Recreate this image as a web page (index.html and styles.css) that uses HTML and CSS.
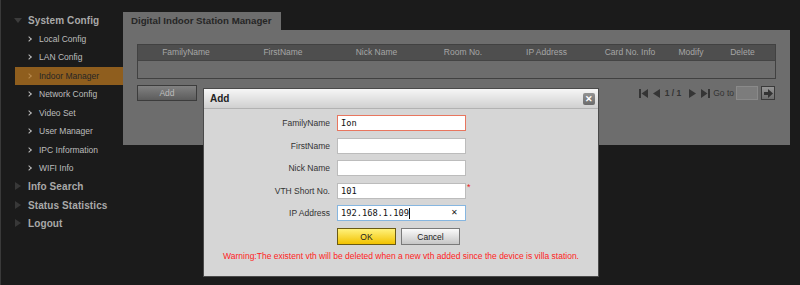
FILE: index.html
```html
<!DOCTYPE html>
<html lang="en">
<head>
  <meta charset="UTF-8" />
  <meta name="viewport" content="width=device-width, initial-scale=1.0" />
  <title>Digital Indoor Station Manager</title>
  <link rel="stylesheet" href="styles.css">
</head>
<body>
  <div class="layout">
    <ul class="menu">
      <li class="group open"><span class="tri"></span>System Config</li>
      <li class="item"><span class="chev"></span>Local Config</li>
      <li class="item"><span class="chev"></span>LAN Config</li>
      <li class="item active"><span class="chev"></span>Indoor Manager</li>
      <li class="item"><span class="chev"></span>Network Config</li>
      <li class="item"><span class="chev"></span>Video Set</li>
      <li class="item"><span class="chev"></span>User Manager</li>
      <li class="item"><span class="chev"></span>IPC Information</li>
      <li class="item"><span class="chev"></span>WIFI Info</li>
      <li class="group"><span class="tri"></span>Info Search</li>
      <li class="group"><span class="tri"></span>Status Statistics</li>
      <li class="group"><span class="tri"></span>Logout</li>
    </ul>

    <div class="main">
      <div class="tab">Digital Indoor Station Manager</div>
      <div class="panel">
        <div class="table">
          <div class="thead">
            <span>FamilyName</span>
            <span>FirstName</span>
            <span>Nick Name</span>
            <span>Room No.</span>
            <span>IP Address</span>
            <span>Card No. Info</span>
            <span>Modify</span>
            <span>Delete</span>
          </div>
          <div class="tbody"></div>
        </div>
        <div class="toolbar">
          <button class="btn-add">Add</button>
          <div class="pager">
            <svg class="pg first" width="9" height="9" viewBox="0 0 9 9"><rect x="0" y="0" width="2" height="9"/><polygon points="9,0 9,9 2.5,4.5"/></svg>
            <svg class="pg prev" width="7" height="9" viewBox="0 0 7 9"><polygon points="7,0 7,9 0,4.5"/></svg>
            <span class="pages">1 / 1</span>
            <svg class="pg next" width="7" height="9" viewBox="0 0 7 9"><polygon points="0,0 0,9 7,4.5"/></svg>
            <svg class="pg last" width="9" height="9" viewBox="0 0 9 9"><polygon points="0,0 0,9 6.5,4.5"/><rect x="7" y="0" width="2" height="9"/></svg>
            <span class="goto">Go to</span>
            <span class="goto-input"></span>
            <span class="goto-btn">
              <svg width="9" height="9" viewBox="0 0 9 9"><polygon points="0,3 4,3 4,0 9,4.5 4,9 4,6 0,6"/></svg>
            </span>
          </div>
        </div>
      </div>
    </div>
  </div>

  <div class="dialog">
    <div class="dialog-title">
      <span>Add</span>
      <span class="close">&#10005;</span>
    </div>
    <div class="form">
      <label>FamilyName</label>
      <div class="field error">Ion</div>
      <span></span>

      <label>FirstName</label>
      <div class="field"></div>
      <span></span>

      <label>Nick Name</label>
      <div class="field"></div>
      <span></span>

      <label>VTH Short No.</label>
      <div class="field">101</div>
      <span class="req">*</span>

      <label>IP Address</label>
      <div class="field focus">192.168.1.109<span class="caret"></span><span class="clear">&#10005;</span></div>
      <span></span>

      <div class="actions">
        <button class="btn-ok">OK</button>
        <button class="btn-cancel">Cancel</button>
      </div>
    </div>
    <p class="warning">Warning:The existent vth will be deleted when a new vth added since the device is villa station.</p>
  </div>
</body>
</html>
```

FILE: styles.css
```css
body {
  margin: 0;
  width: 800px;
  height: 285px;
  overflow: hidden;
  background: #1b1b1b;
  font-family: 'Liberation Sans', Arial, sans-serif;
  font-size: 8.5px;
  position: relative;
  box-sizing: border-box;
  border-left: 1px solid #3a3a3a;
}

.layout {
  display: flex;
}

/* sidebar */

.menu {
  list-style: none;
  margin: 0;
  padding: 11px 0 0 0;
  width: 122px;
}

.menu li {
  height: 18.5px;
  display: flex;
  align-items: center;
}

.menu .group {
  padding-left: 13px;
  font-size: 10px;
  font-weight: bold;
  color: #a9a9a9;
  letter-spacing: 0.1px;
}

.menu .tri {
  width: 9px;
  height: 9px;
  margin-right: 5px;
  position: relative;
}

.menu .tri::before {
  content: '';
  position: absolute;
  left: 1px;
  top: 0;
  border-left: 6px solid #383838;
  border-top: 4.5px solid transparent;
  border-bottom: 4.5px solid transparent;
}

.menu .open .tri::before {
  left: 0;
  top: 2px;
  border-top: 5px solid #3c3c3c;
  border-left: 4.5px solid transparent;
  border-right: 4.5px solid transparent;
  border-bottom: none;
}

.menu .item {
  padding-left: 27px;
  color: #bdbdbd;
}

.menu .chev {
  width: 3px;
  height: 3px;
  border-top: 1.5px solid #bdbdbd;
  border-right: 1.5px solid #bdbdbd;
  transform: rotate(45deg);
  margin-right: 8px;
  margin-left: -1px;
}

.menu .item.active {
  margin-left: 14px;
  padding-left: 13px;
  background: #8f5e1e;
  color: #262626;
}

.menu .active .chev {
  border-color: #b8894c;
}

/* main panel */

.main {
  padding-top: 12px;
  width: 667px;
}

.tab {
  width: 150px;
  height: 18px;
  line-height: 18px;
  padding-left: 8px;
  background: #6d6d6d;
  color: #262626;
  font-size: 9.7px;
  font-weight: bold;
}

.panel {
  background: #6d6d6d;
  height: 101px;
  padding: 14px 14px 0 14px;
}

.table {
  border: 1px solid #414141;
}

.thead {
  display: grid;
  grid-template-columns: 96px 98px 89px 84px 83px 84px 38px 65px;
  height: 15px;
  line-height: 15px;
  background: #4e4e4e;
  color: #a6a6a6;
  text-align: center;
}

.tbody {
  height: 17px;
  border-top: 1px solid #444;
}

.toolbar {
  margin-top: 6px;
  display: flex;
  justify-content: space-between;
  align-items: center;
}

.btn-add {
  width: 60px;
  height: 16px;
  padding: 0;
  border: 1px solid #3c3c3c;
  background: linear-gradient(#818181, #5c5c5c);
  color: #bcbcbc;
  font-family: inherit;
  font-size: 8.5px;
}

.pager {
  display: flex;
  align-items: center;
  color: #333;
  margin-right: 1px;
}

.pg {
  fill: #353535;
}

.pager .prev { margin-left: 5px; }
.pager .pages { margin-left: 5px; font-weight: bold; }
.pager .next { margin-left: 8px; }
.pager .last { margin-left: 5px; }
.pager .goto { margin-left: 3px; }

.goto-input {
  margin-left: 2px;
  width: 20px;
  height: 12px;
  border: 1px solid #8a8a8a;
  background: #7c7c7c;
}

.goto-btn {
  margin-left: 3px;
  width: 12px;
  height: 12px;
  border: 1px solid #3a3a3a;
  background: linear-gradient(#959595, #6c6c6c);
  display: flex;
  align-items: center;
  justify-content: center;
  fill: #333;
}

/* add dialog */

.dialog {
  position: absolute;
  left: 202px;
  top: 88px;
  width: 394px;
  height: 187px;
  background: #d6d6d6;
  border: 1px solid #4a4a4a;
}

.dialog-title {
  height: 19px;
  display: flex;
  justify-content: space-between;
  align-items: center;
  padding: 0 3px 0 6px;
  background: linear-gradient(#f6f6f6, #d0d0d0);
  border-bottom: 1px solid #b2b2b2;
  font-size: 10px;
  font-weight: bold;
  color: #222;
}

.close {
  width: 12px;
  height: 12px;
  line-height: 12px;
  text-align: center;
  border-radius: 2px;
  background: linear-gradient(#939393, #6b6b6b);
  color: #fff;
  font-size: 9px;
}

.form {
  display: grid;
  grid-template-columns: 126px 129px 1fr;
  column-gap: 7px;
  row-gap: 6.5px;
  padding-top: 6px;
  align-items: center;
}

.form label {
  text-align: right;
  color: #333;
  margin-left: -7px;
}

.field {
  height: 16px;
  box-sizing: border-box;
  border: 1px solid #bcbcbc;
  background: #fff;
  padding: 0 3px;
  line-height: 14px;
  font-family: 'DejaVu Sans Mono', 'Liberation Mono', monospace;
  font-size: 8.7px;
  color: #111;
  position: relative;
  display: flex;
  align-items: center;
}

.field.error {
  border-color: #e8765f;
}

.field.focus {
  border-color: #86b6e0;
}

.caret {
  width: 1px;
  height: 11px;
  background: #111;
}

.clear {
  position: absolute;
  right: 7px;
  top: 0;
  font-family: 'Liberation Sans', Arial, sans-serif;
  font-size: 8px;
  color: #222;
}

.req {
  color: #e22;
  margin-left: -6px;
  align-self: start;
  font-size: 9px;
  line-height: 9px;
}

.actions {
  grid-column: 2 / 4;
  display: flex;
  gap: 5px;
  margin-top: 0.5px;
}

.actions button {
  width: 59px;
  height: 17px;
  padding: 0;
  font-family: inherit;
  font-size: 8.5px;
  color: #222;
}

.btn-ok {
  border: 1px solid #6a5a14;
  background: linear-gradient(#fff27c, #f2c200);
}

.btn-cancel {
  border: 1px solid #7a7a7a;
  background: linear-gradient(#fbfbfb, #c6c6c6);
  color: #333;
}

.warning {
  margin: 6px 0 0 0;
  text-align: center;
  color: #f22;
  line-height: 10px;
}
```
